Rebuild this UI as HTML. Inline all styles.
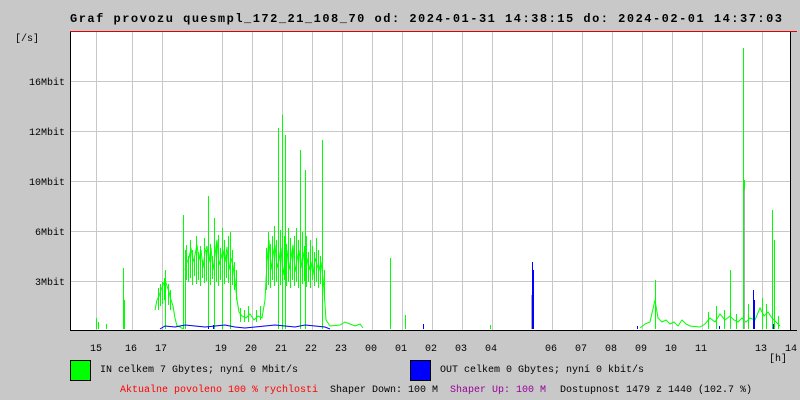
<!DOCTYPE html>
<html><head><meta charset="utf-8"><style>
body{margin:0;background:#c8c8c8;width:800px;height:400px;overflow:hidden;font-family:"Liberation Mono","DejaVu Sans Mono",monospace;}
svg{position:absolute;left:0;top:0}
</style></head><body>
<svg width="800" height="400" xmlns="http://www.w3.org/2000/svg" font-family="Liberation Mono, DejaVu Sans Mono, monospace" font-size="10">
<rect x="70" y="31" width="720" height="299" fill="#fff"/>
<g stroke="#c8c8c8" stroke-width="1">
<path d="M96.5 31V330M132.5 31V330M162.5 31V330M222.5 31V330M252.5 31V330M282.5 31V330M312.5 31V330M342.5 31V330M372.5 31V330M402.5 31V330M432.5 31V330M462.5 31V330M492.5 31V330M552.5 31V330M582.5 31V330M612.5 31V330M642.5 31V330M672.5 31V330M702.5 31V330M762.5 31V330"/>
<path d="M70 81.5H797M70 131.5H797M70 181.5H797M70 231.5H797M70 281.5H797"/>
</g>
<g stroke="#00ff00" stroke-width="1" fill="none">
<path d="M96.5 329V318M98.5 329V322M106.5 329V324M123.5 329V268M124.5 329V300M165.5 329V270M183.5 329V215M185.5 329V250M208.5 329V196M214.5 329V218M222.5 329V228M230.5 329V232M278.5 329V128M282.5 329V115M285.5 329V135M300.5 329V150M305.5 329V170M322.5 329V140M390.5 329V258M405.5 329V315M423.5 329V325M490.5 329V325M655.5 329V280M730.5 329V270M743.5 329V48M744.5 329V180M753.5 329V300M772.5 329V210M774.5 329V240M790.5 329V322"/>
<path d="M186.5 280V245M188.5 282V256M190.5 278V240M192.5 285V250M194.5 276V258M196.5 284V236M198.5 280V252M200.5 286V246M202.5 278V260M204.5 283V238M206.5 281V250M210.5 285V244M212.5 279V256M216.5 282V242M218.5 286V235M220.5 280V248M224.5 284V240M226.5 278V254M228.5 283V236M232.5 285V250M234.5 290V262M236.5 300V270M266.5 290V248M268.5 285V232M270.5 288V244M272.5 280V236M274.5 286V226M276.5 282V240M280.5 285V230M284.5 280V236M286.5 286V244M288.5 282V228M290.5 288V238M292.5 280V250M294.5 286V236M296.5 282V228M298.5 288V240M302.5 284V232M304.5 281V246M306.5 287V236M308.5 282V252M310.5 288V240M312.5 280V246M314.5 286V252M316.5 282V238M318.5 288V250M320.5 284V256M324.5 300V270"/>
<path d="M158.5 310V288M160.5 306V284M162.5 304V282M164.5 300V278M168.5 305V284M170.5 310V290M240.5 322V308M244.5 322V310M248.5 322V306M256.5 322V310M260.5 320V306"/>
<polyline points="155,310 157,300 159,296 161,290 163,285 165,280 167,286 169,292 171,300 173,306 175,318 177,326 180,327 183,329"/>
<polyline points="185,270 187,262 189,258 191,248 193,262 195,255 197,245 199,260 201,250 203,268 205,252 207,246 209,262 211,248 213,270 215,255 217,240 219,265 221,258 223,250 225,262 227,247 229,270 231,258 233,266 235,280 237,300 239,312 242,316 246,318 250,314 254,320 258,316 262,318 265,300 267,262 269,240 271,270 273,255 275,245 277,268 279,260 281,248 283,275 285,262 287,250 289,270 291,258 293,245 295,272 297,260 299,250 301,268 303,252 305,265 307,258 309,270 311,262 313,275 315,258 317,265 319,270 321,262 323,278 324,290 326,320 330,326 340,325 345,322 350,324 355,326 360,324 363,328"/>
<polyline points="640,328 645,324 650,322 655,300 658,318 662,322 666,320 670,324 674,322 678,326 682,320 686,324 690,326 700,327 705,324 710,318 715,322 720,314 725,320 730,316 734,320 738,322 742,318 746,322 750,318 755,320 760,308 764,316 768,312 772,318 776,322 780,326"/>
<path d="M708.5 329V312M716.5 329V306M724.5 329V310M736.5 329V314M748.5 329V304M762.5 329V298M766.5 329V304M778.5 329V316"/>
</g>
<g stroke="#aaaaaa" stroke-width="1"><path d="M744.5 329V190M531.5 329V295"/></g>
<g stroke="#0000ff" stroke-width="1" fill="none">
<path d="M532.5 329V262M533.5 329V270M423.5 329V324M753.5 329V290M754.5 329V300M213.5 329V325M208.5 329V327M637.5 329V326M773.5 329V324M719.5 329V326"/>
<polyline points="160,329 165,326 175,327 185,325 195,326 205,327 215,326 225,325 235,327 245,328 255,327 265,326 275,325 285,326 295,327 305,325 315,326 325,327 330,329"/>
</g>
<path d="M70.5 31V330.5H797" stroke="#000" fill="none"/>
<path d="M790.5 31V330" stroke="#000"/>
<path d="M70 31.5H797" stroke="#e00000"/>
<text x="70" y="22" font-size="12" font-weight="bold" letter-spacing="1.5" fill="#000">Graf provozu quesmpl_172_21_108_70 od: 2024-01-31 14:38:15 do: 2024-02-01 14:37:03</text>
<g fill="#000" text-anchor="end">
<text x="39" y="41">[/s]</text>
<text x="65" y="85">16Mbit</text>
<text x="65" y="135">12Mbit</text>
<text x="65" y="185">10Mbit</text>
<text x="65" y="235">6Mbit</text>
<text x="65" y="285">3Mbit</text>
</g>
<g fill="#000" text-anchor="middle">
<text x="96" y="351">15</text><text x="131" y="351">16</text><text x="161" y="351">17</text>
<text x="221" y="351">19</text><text x="251" y="351">20</text><text x="281" y="351">21</text>
<text x="311" y="351">22</text><text x="341" y="351">23</text><text x="371" y="351">00</text>
<text x="401" y="351">01</text><text x="431" y="351">02</text><text x="461" y="351">03</text>
<text x="491" y="351">04</text><text x="551" y="351">06</text><text x="581" y="351">07</text>
<text x="611" y="351">08</text><text x="641" y="351">09</text><text x="671" y="351">10</text>
<text x="701" y="351">11</text><text x="761" y="351">13</text><text x="791" y="351">14</text>
<text x="778" y="361">[h]</text>
</g>
<rect x="70.5" y="360.5" width="20" height="20" fill="#00ff00" stroke="#000"/>
<text x="100" y="372" fill="#000">IN celkem 7 Gbytes; nyní 0 Mbit/s</text>
<rect x="410.5" y="360.5" width="20" height="20" fill="#0000ff" stroke="#000"/>
<text x="440" y="372" fill="#000">OUT celkem 0 Gbytes; nyní 0 kbit/s</text>
<text x="120" y="392" fill="#ff0000">Aktualne povoleno 100 % rychlosti</text>
<text x="330" y="392" fill="#000">Shaper Down: 100 M</text>
<text x="450" y="392" fill="#990099">Shaper Up: 100 M</text>
<text x="560" y="392" fill="#000">Dostupnost 1479 z 1440 (102.7 %)</text>
</svg>
</body></html>
